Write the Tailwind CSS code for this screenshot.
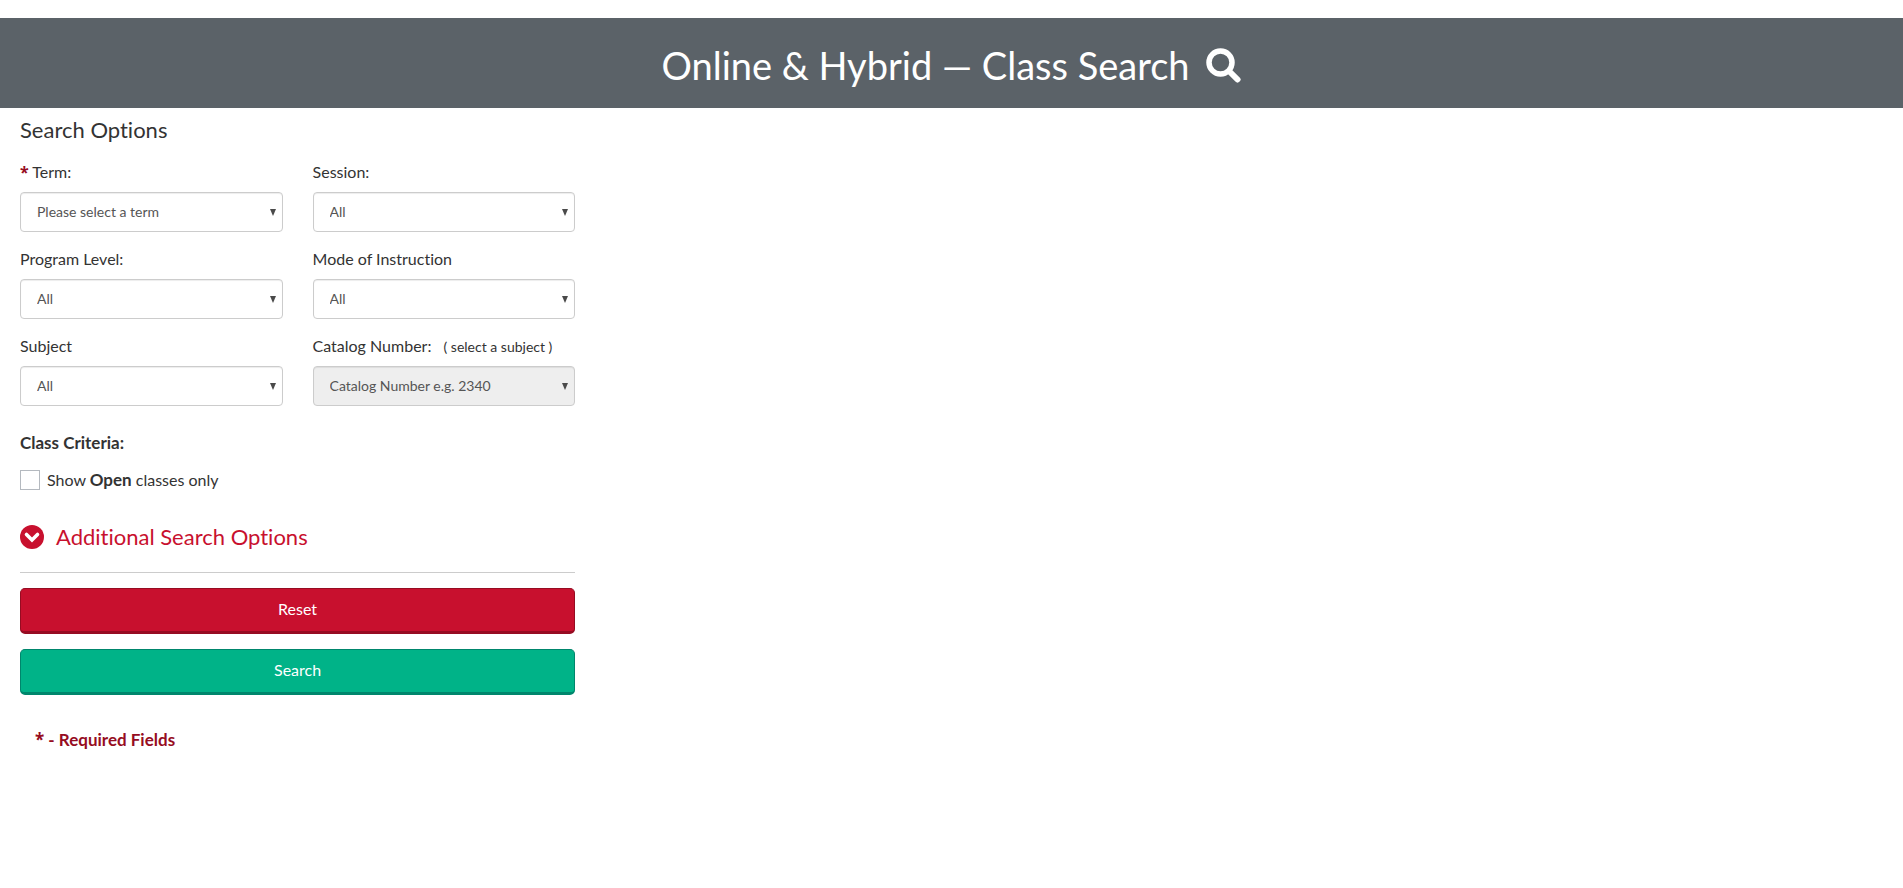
<!DOCTYPE html>
<html lang="en">
<head>
<meta charset="utf-8">
<meta name="viewport" content="width=device-width, initial-scale=1">
<title>Online &amp; Hybrid — Class Search</title>
<script src="https://cdn.jsdelivr.net/npm/@tailwindcss/browser@4"></script>
</head>
<body class="bg-white pt-[18px] font-['Lato','Noto_Sans',sans-serif] text-base text-[#333333] [font-variant-ligatures:none]">
<header class="flex min-h-[90px] items-center justify-center gap-4 bg-[#5b6268] px-5 pt-1 text-white">
  <h1 class="text-[38px] leading-[48px]">Online &amp; Hybrid — Class Search</h1>
  <svg class="size-9" viewBox="0 0 36 36" fill="none" stroke="currentColor" aria-hidden="true"><circle cx="14.5" cy="15.5" r="11.5" stroke-width="5.5"/><path d="M24.5 25.5 31.5 32.5" stroke-width="6" stroke-linecap="round"/></svg>
</header>
<main>
<form class="w-full pt-2 pr-2.5 pl-5 md:w-[30.75%]">
  <h2 class="text-[22px] leading-7">Search Options</h2>
  <div class="mt-4 grid grid-cols-2 gap-x-[30px] gap-y-[15px]">
    <div class="flex flex-col gap-2">
      <label for="term" class="leading-6"><b class="font-['Noto_Sans',sans-serif] text-[#960c22]">*</b> Term:</label>
      <div class="relative">
        <select id="term" class="h-10 w-full appearance-none rounded border border-[#cccccc] bg-white px-4 text-sm text-[#555555] shadow-[inset_0_1px_1px_rgba(0,0,0,0.075)]"><option>Please select a term</option></select>
        <svg class="pointer-events-none absolute top-[17px] right-[7px] h-[7px] w-1.5 fill-[#4a4a4a]" viewBox="0 0 6 7"><path d="M0 0h6L3 7z"/></svg>
      </div>
    </div>
    <div class="flex flex-col gap-2">
      <label for="session" class="leading-6">Session:</label>
      <div class="relative">
        <select id="session" class="h-10 w-full appearance-none rounded border border-[#cccccc] bg-white px-4 text-sm text-[#555555] shadow-[inset_0_1px_1px_rgba(0,0,0,0.075)]"><option>All</option></select>
        <svg class="pointer-events-none absolute top-[17px] right-[7px] h-[7px] w-1.5 fill-[#4a4a4a]" viewBox="0 0 6 7"><path d="M0 0h6L3 7z"/></svg>
      </div>
    </div>
    <div class="flex flex-col gap-2">
      <label for="level" class="leading-6">Program Level:</label>
      <div class="relative">
        <select id="level" class="h-10 w-full appearance-none rounded border border-[#cccccc] bg-white px-4 text-sm text-[#555555] shadow-[inset_0_1px_1px_rgba(0,0,0,0.075)]"><option>All</option></select>
        <svg class="pointer-events-none absolute top-[17px] right-[7px] h-[7px] w-1.5 fill-[#4a4a4a]" viewBox="0 0 6 7"><path d="M0 0h6L3 7z"/></svg>
      </div>
    </div>
    <div class="flex flex-col gap-2">
      <label for="mode" class="leading-6">Mode of Instruction</label>
      <div class="relative">
        <select id="mode" class="h-10 w-full appearance-none rounded border border-[#cccccc] bg-white px-4 text-sm text-[#555555] shadow-[inset_0_1px_1px_rgba(0,0,0,0.075)]"><option>All</option></select>
        <svg class="pointer-events-none absolute top-[17px] right-[7px] h-[7px] w-1.5 fill-[#4a4a4a]" viewBox="0 0 6 7"><path d="M0 0h6L3 7z"/></svg>
      </div>
    </div>
    <div class="flex flex-col gap-2">
      <label for="subject" class="leading-6">Subject</label>
      <div class="relative">
        <select id="subject" class="h-10 w-full appearance-none rounded border border-[#cccccc] bg-white px-4 text-sm text-[#555555] shadow-[inset_0_1px_1px_rgba(0,0,0,0.075)]"><option>All</option></select>
        <svg class="pointer-events-none absolute top-[17px] right-[7px] h-[7px] w-1.5 fill-[#4a4a4a]" viewBox="0 0 6 7"><path d="M0 0h6L3 7z"/></svg>
      </div>
    </div>
    <div class="flex flex-col gap-2">
      <label for="catalog" class="leading-6 whitespace-nowrap">Catalog Number: <span class="ml-2 text-sm">( select a subject )</span></label>
      <div class="relative">
        <select id="catalog" disabled class="h-10 w-full appearance-none rounded border border-[#cccccc] bg-[#eeeeee] px-4 text-sm text-[#555555] opacity-100 shadow-[inset_0_1px_1px_rgba(0,0,0,0.075)]"><option>Catalog Number e.g. 2340</option></select>
        <svg class="pointer-events-none absolute top-[17px] right-[7px] h-[7px] w-1.5 fill-[#4a4a4a]" viewBox="0 0 6 7"><path d="M0 0h6L3 7z"/></svg>
      </div>
    </div>
  </div>
  <fieldset class="mt-[25px]">
    <legend class="text-[17px] leading-6 font-bold">Class Criteria:</legend>
    <label class="mt-[13px] flex items-center gap-[7px] leading-6"><input type="checkbox" class="size-5 appearance-none border border-[#b4b9bf] bg-white"><span>Show <b class="text-[17px]">Open</b> classes only</span></label>
  </fieldset>
  <button type="button" class="mt-[29px] flex items-center gap-3 text-[22px] leading-8 text-[#c8102e]">
    <svg class="size-6" viewBox="0 0 24 24" aria-hidden="true"><circle cx="12" cy="12" r="12" fill="currentColor"/><path d="m6.5 9.5 5.5 5.5 5.5-5.5" fill="none" stroke="white" stroke-width="3.6" stroke-linecap="round"/></svg>
    Additional Search Options
  </button>
  <hr class="mt-[19px] border-[#cccccc]">
  <div class="mt-[15px] flex flex-col gap-[15px]">
    <button type="reset" class="h-[46px] rounded-[5px] border border-b-[3px] border-[#960c22] bg-[#c8102e] pb-0.5 text-white">Reset</button>
    <button type="submit" class="h-[46px] rounded-[5px] border border-b-[3px] border-[#00866c] bg-[#00b388] pb-0.5 text-white">Search</button>
  </div>
  <p class="mt-[33px] pl-[15px] text-[17px] leading-6 font-bold text-[#960c22]"><span class="font-['Noto_Sans',sans-serif]">*</span> - Required Fields</p>
</form>
</main>
</body>
</html>
